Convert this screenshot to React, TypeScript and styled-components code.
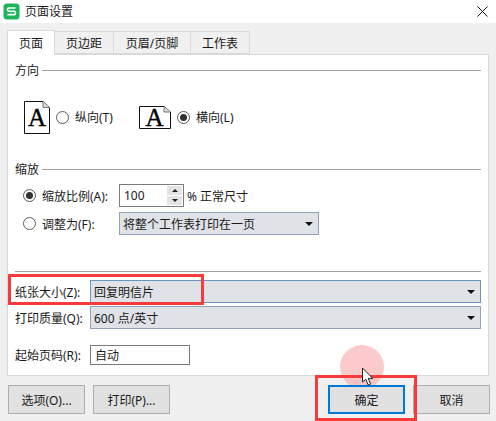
import styled, { createGlobalStyle } from 'styled-components';

const GlobalStyle = createGlobalStyle`
  html, body {
    margin: 0;
    padding: 0;
    background: #f0f0f0;
  }
  body {
    font-family: "Noto Sans", "Noto Sans CJK SC", sans-serif;
    font-size: 12px;
    color: #1a1a1a;
  }
`;

const Dialog = styled.div`
  position: relative;
  width: 496px;
  height: 421px;
  overflow: hidden;
  background: #f0f0f0;
`;

const TitleBar = styled.div`
  display: flex;
  align-items: center;
  height: 23px;
  padding: 0 8px 0 3px;
  gap: 5px;
  background: #fff;
`;

const TitleText = styled.span`
  flex: 1;
  font-size: 12px;
  line-height: 18px;
`;

const TabStrip = styled.div`
  display: flex;
  height: 23px;
  margin: 8px 0 0 7px;
`;

const Tab = styled.div<{ $width: number; $active?: boolean }>`
  box-sizing: border-box;
  display: flex;
  align-items: center;
  justify-content: center;
  width: ${({ $width }) => $width}px;
  height: ${({ $active }) => ($active ? 25 : 23)}px;
  margin-top: ${({ $active }) => ($active ? -1 : 0)}px;
  border: 1px solid #d9d9d9;
  border-bottom: ${({ $active }) => ($active ? 'none' : '1px solid #d9d9d9')};
  border-left: ${({ $active }) => ($active ? '1px solid #d9d9d9' : 'none')};
  background: ${({ $active }) => ($active ? '#fff' : '#f0f0f0')};
  position: relative;
  z-index: 1;
`;

const Panel = styled.div`
  box-sizing: border-box;
  width: 482px;
  margin-left: 7px;
  padding: 9px 7px 10px;
  border: 1px solid #d9d9d9;
  background: #fff;
`;

const Legend = styled.div<{ $top?: number }>`
  display: flex;
  align-items: center;
  gap: 3px;
  height: 14px;
  margin-top: ${({ $top }) => $top ?? 0}px;
  line-height: 14px;

  &::after {
    content: '';
    flex: 1;
    height: 1px;
    margin-top: -2px;
    background: #a0a0a0;
  }
`;

const OrientationRow = styled.div`
  display: flex;
  align-items: center;
  height: 32px;
  margin: 23px 0 0 9px;
`;

const Choice = styled.label<{ $width: number }>`
  display: flex;
  align-items: center;
  gap: 6px;
  width: ${({ $width }) => $width}px;
  margin-left: 6px;
`;

const Radio = styled.span<{ $checked?: boolean }>`
  box-sizing: border-box;
  flex: none;
  display: flex;
  align-items: center;
  justify-content: center;
  width: 13px;
  height: 13px;
  border: 1px solid #5a5a5a;
  border-radius: 50%;
  background: #fff;

  &::after {
    content: '';
    display: ${({ $checked }) => ($checked ? 'block' : 'none')};
    width: 7px;
    height: 7px;
    border-radius: 50%;
    background: #333;
  }
`;

const ScaleRow = styled.div<{ $top: number }>`
  display: flex;
  align-items: center;
  height: 23px;
  margin: ${({ $top }) => $top}px 0 0 8px;
`;

const ScaleLabel = styled.label`
  display: flex;
  align-items: center;
  gap: 6px;
  width: 96px;
  white-space: nowrap;
`;

const SpinBox = styled.div`
  box-sizing: border-box;
  display: flex;
  align-items: center;
  justify-content: space-between;
  width: 65px;
  height: 23px;
  padding: 1px 1px 1px 4px;
  border: 1px solid #7a7a7a;
  background: #fff;
`;

const SpinButtons = styled.div`
  display: flex;
  flex-direction: column;
  gap: 1px;
  width: 15px;
  height: 19px;
  background: #fff;
`;

const SpinButton = styled.div<{ $up?: boolean }>`
  flex: 1;
  display: flex;
  align-items: center;
  justify-content: center;
  background: #e4e4e4;

  &::after {
    content: '';
    border-left: 3px solid transparent;
    border-right: 3px solid transparent;
    ${({ $up }) => ($up ? 'border-bottom: 3px solid #222;' : 'border-top: 3px solid #222;')}
  }
`;

const UnitText = styled.span`
  margin-left: 3px;
`;

const Select = styled.div<{ $width?: number; $focused?: boolean }>`
  box-sizing: border-box;
  display: flex;
  align-items: center;
  justify-content: space-between;
  width: ${({ $width }) => ($width ? `${$width}px` : 'auto')};
  flex: ${({ $width }) => ($width ? 'none' : 1)};
  height: 23px;
  padding: 0 5px 0 3px;
  border: 1px solid ${({ $focused }) => ($focused ? '#6b94c4' : '#8fa2b8')};
  background: #dfe2e6;
`;

const Caret = styled.span`
  width: 0;
  height: 0;
  border-left: 4px solid transparent;
  border-right: 4px solid transparent;
  border-top: 4px solid #111;
`;

const Divider = styled.div`
  height: 1px;
  margin-top: 36px;
  background: #a0a0a0;
`;

const FieldRow = styled.div<{ $top: number }>`
  display: flex;
  align-items: center;
  margin-top: ${({ $top }) => $top}px;
`;

const FieldLabel = styled.label`
  flex: none;
  width: 75px;
  white-space: nowrap;
`;

const TextInput = styled.div`
  box-sizing: border-box;
  display: flex;
  align-items: center;
  width: 100px;
  height: 20px;
  padding-left: 4px;
  border: 1px solid #7a7a7a;
  background: #fff;
`;

const Footer = styled.div`
  position: relative;
  z-index: 1;
  display: flex;
  margin: 9px 0 0 8px;
  gap: 8px;
`;

const FooterButton = styled.button<{ $primary?: boolean; $pushRight?: boolean }>`
  box-sizing: border-box;
  width: 77px;
  height: 29px;
  margin-left: ${({ $pushRight }) => ($pushRight ? '150px' : 0)};
  padding: 0;
  border: ${({ $primary }) => ($primary ? '2px solid #0078d7' : '1px solid #adadad')};
  background: #e1e1e1;
  color: inherit;
  font: inherit;
`;

const Highlight = styled.div<{ $x: number; $y: number; $w: number; $h: number }>`
  box-sizing: border-box;
  position: absolute;
  z-index: 2;
  left: ${({ $x }) => $x}px;
  top: ${({ $y }) => $y}px;
  width: ${({ $w }) => $w}px;
  height: ${({ $h }) => $h}px;
  border: 3px solid #f93a3a;
  pointer-events: none;
`;

const ClickRipple = styled.div`
  position: absolute;
  left: 340px;
  top: 345px;
  width: 44px;
  height: 44px;
  border-radius: 50%;
  background: rgba(250, 150, 150, 0.5);
`;

const CursorIcon = styled.svg`
  position: absolute;
  z-index: 3;
  left: 361px;
  top: 367px;
`;

const PageSvg = styled.svg`
  flex: none;
  overflow: visible;
`;

const Logo = () => (
  <svg width="17" height="17" viewBox="0 0 17 17">
    <rect x="0.5" y="0.5" width="16" height="16" rx="3.5" fill="#1db45a" />
    <path d="M12.5 5H5.8C4 5 4 8.2 5.8 8.2H11.2C13 8.2 13 11.6 11.2 11.6H4.5" fill="none" stroke="#fff" strokeWidth="1.6" />
  </svg>
);

const CloseIcon = () => (
  <svg width="11" height="11" viewBox="0 0 11 11">
    <path d="M0.5 0.5L10.5 10.5M10.5 0.5L0.5 10.5" stroke="#111" strokeWidth="1" />
  </svg>
);

const PortraitPage = () => (
  <PageSvg width="26" height="33" viewBox="0 0 26 33">
    <path d="M0.5 0.5H19L25.5 6.5V32.5H0.5Z" fill="#fff" stroke="#111" />
    <path d="M19 0.5V6.5H25.5" fill="#ddd" stroke="#777" />
    <text x="13" y="25" textAnchor="middle" fontFamily="Liberation Serif, serif" fontSize="25" fill="#000" stroke="#000" strokeWidth="0.4">A</text>
  </PageSvg>
);

const LandscapePage = () => (
  <PageSvg width="32" height="23" viewBox="0 0 32 23">
    <path d="M0.5 0.5H25L31.5 6V22.5H0.5Z" fill="#fff" stroke="#111" />
    <path d="M25 0.5V6H31.5" fill="#ddd" stroke="#777" />
    <text x="15.5" y="20" textAnchor="middle" fontFamily="Liberation Serif, serif" fontSize="25" fill="#000" stroke="#000" strokeWidth="0.4">A</text>
  </PageSvg>
);

const tabs = [
  { label: '页面', width: 48, active: true },
  { label: '页边距', width: 59 },
  { label: '页眉/页脚', width: 77 },
  { label: '工作表', width: 59 },
];

export default function App() {
  return (
    <Dialog>
      <GlobalStyle />
      <TitleBar>
        <Logo />
        <TitleText>页面设置</TitleText>
        <CloseIcon />
      </TitleBar>

      <TabStrip>
        {tabs.map(tab => (
          <Tab key={tab.label} $width={tab.width} $active={tab.active}>
            {tab.label}
          </Tab>
        ))}
      </TabStrip>

      <Panel>
        <Legend>方向</Legend>
        <OrientationRow>
          <PortraitPage />
          <Choice $width={83}>
            <Radio />
            纵向(T)
          </Choice>
          <LandscapePage />
          <Choice $width={70}>
            <Radio $checked />
            横向(L)
          </Choice>
        </OrientationRow>

        <Legend $top={30}>缩放</Legend>
        <ScaleRow $top={7}>
          <ScaleLabel>
            <Radio $checked />
            缩放比例(A):
          </ScaleLabel>
          <SpinBox>
            100
            <SpinButtons>
              <SpinButton $up />
              <SpinButton />
            </SpinButtons>
          </SpinBox>
          <UnitText>% 正常尺寸</UnitText>
        </ScaleRow>
        <ScaleRow $top={5}>
          <ScaleLabel>
            <Radio />
            调整为(F):
          </ScaleLabel>
          <Select $width={200}>
            将整个工作表打印在一页
            <Caret />
          </Select>
        </ScaleRow>

        <Divider />

        <FieldRow $top={8}>
          <FieldLabel>纸张大小(Z):</FieldLabel>
          <Select $focused>
            回复明信片
            <Caret />
          </Select>
        </FieldRow>
        <FieldRow $top={3}>
          <FieldLabel>打印质量(Q):</FieldLabel>
          <Select>
            600 点/英寸
            <Caret />
          </Select>
        </FieldRow>
        <FieldRow $top={16}>
          <FieldLabel>起始页码(R):</FieldLabel>
          <TextInput>自动</TextInput>
        </FieldRow>
      </Panel>

      <Footer>
        <FooterButton>选项(O)...</FooterButton>
        <FooterButton>打印(P)...</FooterButton>
        <FooterButton $primary $pushRight>确定</FooterButton>
        <FooterButton>取消</FooterButton>
      </Footer>

      <Highlight $x={8} $y={274} $w={196} $h={31} />
      <ClickRipple />
      <Highlight $x={315} $y={375} $w={102} $h={46} />
      <CursorIcon width="14" height="20" viewBox="0 0 14 20">
        <path d="M1.5 1V15L4.8 12.2L7.2 18L9.6 17L7.2 11.4H11.8Z" fill="#fff" stroke="#222" strokeWidth="1" />
      </CursorIcon>
    </Dialog>
  );
}
